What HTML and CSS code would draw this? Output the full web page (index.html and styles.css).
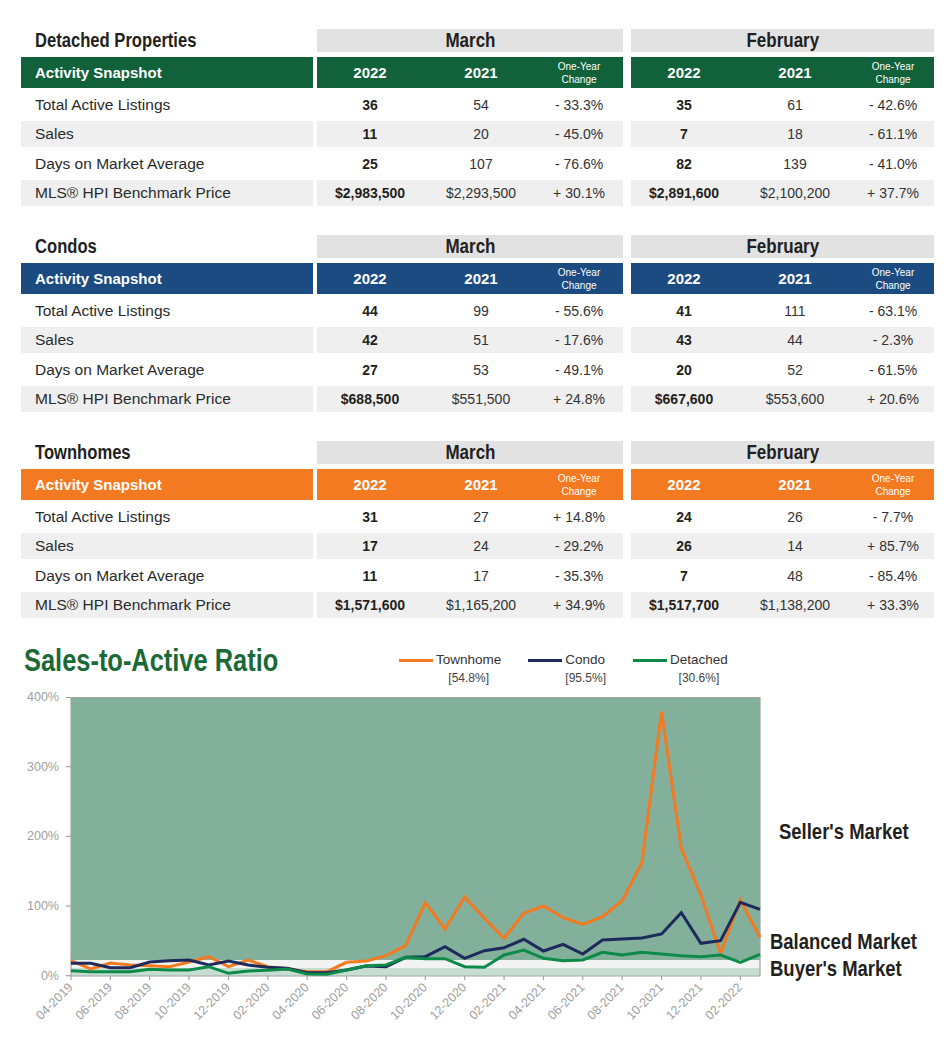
FILE: index.html
```html
<!DOCTYPE html>
<html lang="en">
<head>
<meta charset="utf-8">
<title>Sales-to-Active Ratio</title>
<link rel="stylesheet" href="styles.css">
</head>
<body>
<div class="page">

  <section class="section green">
    <div class="labels">
      <div class="cap"><span class="cnd">Detached Properties</span></div>
      <div class="bar">Activity Snapshot</div>
      <div class="row">Total Active Listings</div>
      <div class="row alt">Sales</div>
      <div class="row">Days on Market Average</div>
      <div class="row alt">MLS® HPI Benchmark Price</div>
    </div>
    <div class="month">
      <div class="cap"><span class="cnd">March</span></div>
      <div class="bar"><span>2022</span><span>2021</span><span class="chg">One-Year<br>Change</span></div>
      <div class="row"><b>36</b><span>54</span><span>- 33.3%</span></div>
      <div class="row alt"><b>11</b><span>20</span><span>- 45.0%</span></div>
      <div class="row"><b>25</b><span>107</span><span>- 76.6%</span></div>
      <div class="row alt"><b>$2,983,500</b><span>$2,293,500</span><span>+ 30.1%</span></div>
    </div>
    <div class="month feb">
      <div class="cap"><span class="cnd">February</span></div>
      <div class="bar"><span>2022</span><span>2021</span><span class="chg">One-Year<br>Change</span></div>
      <div class="row"><b>35</b><span>61</span><span>- 42.6%</span></div>
      <div class="row alt"><b>7</b><span>18</span><span>- 61.1%</span></div>
      <div class="row"><b>82</b><span>139</span><span>- 41.0%</span></div>
      <div class="row alt"><b>$2,891,600</b><span>$2,100,200</span><span>+ 37.7%</span></div>
    </div>
  </section>

  <section class="section blue">
    <div class="labels">
      <div class="cap"><span class="cnd">Condos</span></div>
      <div class="bar">Activity Snapshot</div>
      <div class="row">Total Active Listings</div>
      <div class="row alt">Sales</div>
      <div class="row">Days on Market Average</div>
      <div class="row alt">MLS® HPI Benchmark Price</div>
    </div>
    <div class="month">
      <div class="cap"><span class="cnd">March</span></div>
      <div class="bar"><span>2022</span><span>2021</span><span class="chg">One-Year<br>Change</span></div>
      <div class="row"><b>44</b><span>99</span><span>- 55.6%</span></div>
      <div class="row alt"><b>42</b><span>51</span><span>- 17.6%</span></div>
      <div class="row"><b>27</b><span>53</span><span>- 49.1%</span></div>
      <div class="row alt"><b>$688,500</b><span>$551,500</span><span>+ 24.8%</span></div>
    </div>
    <div class="month feb">
      <div class="cap"><span class="cnd">February</span></div>
      <div class="bar"><span>2022</span><span>2021</span><span class="chg">One-Year<br>Change</span></div>
      <div class="row"><b>41</b><span>111</span><span>- 63.1%</span></div>
      <div class="row alt"><b>43</b><span>44</span><span>- 2.3%</span></div>
      <div class="row"><b>20</b><span>52</span><span>- 61.5%</span></div>
      <div class="row alt"><b>$667,600</b><span>$553,600</span><span>+ 20.6%</span></div>
    </div>
  </section>

  <section class="section orange">
    <div class="labels">
      <div class="cap"><span class="cnd">Townhomes</span></div>
      <div class="bar">Activity Snapshot</div>
      <div class="row">Total Active Listings</div>
      <div class="row alt">Sales</div>
      <div class="row">Days on Market Average</div>
      <div class="row alt">MLS® HPI Benchmark Price</div>
    </div>
    <div class="month">
      <div class="cap"><span class="cnd">March</span></div>
      <div class="bar"><span>2022</span><span>2021</span><span class="chg">One-Year<br>Change</span></div>
      <div class="row"><b>31</b><span>27</span><span>+ 14.8%</span></div>
      <div class="row alt"><b>17</b><span>24</span><span>- 29.2%</span></div>
      <div class="row"><b>11</b><span>17</span><span>- 35.3%</span></div>
      <div class="row alt"><b>$1,571,600</b><span>$1,165,200</span><span>+ 34.9%</span></div>
    </div>
    <div class="month feb">
      <div class="cap"><span class="cnd">February</span></div>
      <div class="bar"><span>2022</span><span>2021</span><span class="chg">One-Year<br>Change</span></div>
      <div class="row"><b>24</b><span>26</span><span>- 7.7%</span></div>
      <div class="row alt"><b>26</b><span>14</span><span>+ 85.7%</span></div>
      <div class="row"><b>7</b><span>48</span><span>- 85.4%</span></div>
      <div class="row alt"><b>$1,517,700</b><span>$1,138,200</span><span>+ 33.3%</span></div>
    </div>
  </section>

  <section class="chart">
    <div class="chart-head">
      <h2 class="chart-title"><span class="cnd">Sales-to-Active Ratio</span></h2>
      <div class="legend">
        <div class="item"><i class="swatch s-town"></i><span class="name">Townhome</span><span class="val">[54.8%]</span></div>
        <div class="item"><i class="swatch s-condo"></i><span class="name">Condo</span><span class="val">[95.5%]</span></div>
        <div class="item"><i class="swatch s-det"></i><span class="name">Detached</span><span class="val">[30.6%]</span></div>
      </div>
    </div>
    <div class="chart-body">
      <svg class="plot" width="770" height="362" viewBox="0 690 770 362" xmlns="http://www.w3.org/2000/svg">
        <rect x="71" y="697" width="689" height="263" fill="#83b09b"/>
        <rect x="71" y="960" width="689" height="8" fill="#f2f3f3"/>
        <rect x="71" y="968" width="689" height="8" fill="#c6ddd1"/>
        <g stroke="#a3a3a3" stroke-width="1.2" fill="none">
          <line x1="66" y1="697.5" x2="760" y2="697.5"/>
          <line x1="760" y1="697" x2="760" y2="976"/>
          <line x1="71" y1="697" x2="71" y2="976"/>
          <line x1="71" y1="976" x2="760" y2="976"/>
          <line x1="66" y1="766.7" x2="71" y2="766.7"/>
          <line x1="66" y1="836.4" x2="71" y2="836.4"/>
          <line x1="66" y1="906" x2="71" y2="906"/>
          <line x1="66" y1="975.7" x2="71" y2="975.7"/>
          <path d="M71 976v4M110.4 976v4M149.7 976v4M189.1 976v4M228.5 976v4M267.9 976v4M307.2 976v4M346.6 976v4M386 976v4M425.3 976v4M464.7 976v4M504.1 976v4M543.5 976v4M582.8 976v4M622.2 976v4M661.6 976v4M700.9 976v4M740.3 976v4"/>
        </g>
        <g class="ylab" text-anchor="end">
          <text x="59" y="701">400%</text>
          <text x="59" y="770.7">300%</text>
          <text x="59" y="840.4">200%</text>
          <text x="59" y="910">100%</text>
          <text x="59" y="979.7">0%</text>
        </g>
        <g class="xlab" text-anchor="end">
          <text x="73.5" y="988" transform="rotate(-45 73.5 988)">04-2019</text>
          <text x="112.9" y="988" transform="rotate(-45 112.9 988)">06-2019</text>
          <text x="152.2" y="988" transform="rotate(-45 152.2 988)">08-2019</text>
          <text x="191.6" y="988" transform="rotate(-45 191.6 988)">10-2019</text>
          <text x="231" y="988" transform="rotate(-45 231 988)">12-2019</text>
          <text x="270.4" y="988" transform="rotate(-45 270.4 988)">02-2020</text>
          <text x="309.7" y="988" transform="rotate(-45 309.7 988)">04-2020</text>
          <text x="349.1" y="988" transform="rotate(-45 349.1 988)">06-2020</text>
          <text x="388.5" y="988" transform="rotate(-45 388.5 988)">08-2020</text>
          <text x="427.8" y="988" transform="rotate(-45 427.8 988)">10-2020</text>
          <text x="467.2" y="988" transform="rotate(-45 467.2 988)">12-2020</text>
          <text x="506.6" y="988" transform="rotate(-45 506.6 988)">02-2021</text>
          <text x="546" y="988" transform="rotate(-45 546 988)">04-2021</text>
          <text x="585.3" y="988" transform="rotate(-45 585.3 988)">06-2021</text>
          <text x="624.7" y="988" transform="rotate(-45 624.7 988)">08-2021</text>
          <text x="664.1" y="988" transform="rotate(-45 664.1 988)">10-2021</text>
          <text x="703.4" y="988" transform="rotate(-45 703.4 988)">12-2021</text>
          <text x="742.8" y="988" transform="rotate(-45 742.8 988)">02-2022</text>
        </g>
        <g fill="none" stroke-width="3" stroke-linejoin="miter">
          <polyline stroke="#f37a21" points="71,960.7 90.7,969 110.4,963 130.1,965 149.7,965.7 169.4,966.7 189.1,962 208.8,956.7 228.5,966.7 248.2,960 267.9,966.7 287.5,969 307.2,971.7 326.9,971.7 346.6,962.3 366.3,961 386,955.7 405.7,945.7 425.3,902.7 445,929 464.7,897 484.4,918.3 504.1,938.3 523.8,913.3 543.5,906 563.1,917.7 582.8,924.3 602.5,916.7 622.2,900.7 641.9,862.7 661.6,711.7 681.3,848.3 700.9,895 720.6,953.3 740.3,900 760,937.3"/>
          <polyline stroke="#1d2a5c" points="71,963.3 90.7,963.3 110.4,967.7 130.1,967.7 149.7,962 169.4,960.7 189.1,960 208.8,965 228.5,961 248.2,965 267.9,967.3 287.5,968.3 307.2,972.7 326.9,972.7 346.6,970 366.3,966 386,966.7 405.7,957.3 425.3,956.7 445,946.7 464.7,958.3 484.4,950.7 504.1,947.7 523.8,939.3 543.5,951 563.1,944.3 582.8,954 602.5,940 622.2,939 641.9,938 661.6,934 681.3,912.7 700.9,943.3 720.6,940.7 740.3,902.3 760,909.3"/>
          <polyline stroke="#0d8a47" points="71,970.7 90.7,971.7 110.4,971.7 130.1,971.7 149.7,969.3 169.4,970 189.1,970 208.8,966.7 228.5,973.3 248.2,971 267.9,970.3 287.5,969 307.2,974 326.9,974.3 346.6,970 366.3,965.7 386,965 405.7,957.3 425.3,958.7 445,958.7 464.7,966.7 484.4,967.3 504.1,955 523.8,950 543.5,958.3 563.1,960.7 582.8,960 602.5,952.3 622.2,955 641.9,952.3 661.6,954 681.3,955.7 700.9,956.7 720.6,955 740.3,962.3 760,954.3"/>
        </g>
      </svg>
      <div class="side">
        <div class="seller"><span class="cnd">Seller's Market</span></div>
        <div class="balanced"><span class="cnd">Balanced Market</span></div>
        <div class="buyer"><span class="cnd">Buyer's Market</span></div>
      </div>
    </div>
  </section>

</div>
</body>
</html>
```

FILE: styles.css
```css
* { box-sizing: border-box; }

body {
  margin: 0;
  width: 950px;
  background: #ffffff;
  color: #231f20;
  font-family: "Liberation Sans", Arial, sans-serif;
}

.page {
  padding: 29px 0 0 21px;
}

/* condensed look for the headline face */
.cnd {
  display: inline-block;
  white-space: nowrap;
  transform: scaleX(0.83);
  transform-origin: left center;
}

.section {
  display: flex;
  margin-bottom: 29px;
}

.section.orange {
  margin-bottom: 0;
}

.labels { width: 292px; }

.month {
  width: 306px;
  margin-left: 4px;
}

.month.feb {
  width: 303px;
  margin-left: 8px;
}

.cap {
  height: 23px;
  display: flex;
  align-items: center;
  font-weight: bold;
  font-size: 20px;
  color: #231f20;
}

.labels .cap { padding-left: 14px; }

.month .cap {
  justify-content: center;
  background: #e2e2e3;
}

.month .cap .cnd {
  transform: scaleX(0.85);
  transform-origin: center center;
}

.bar {
  height: 31px;
  margin-top: 5px;
  color: #ffffff;
}

.green .bar { background: #11613a; }
.blue .bar { background: #1b4b80; }
.orange .bar { background: #f37a21; }

.labels .bar {
  display: flex;
  align-items: center;
  padding-left: 14px;
  font-weight: bold;
  font-size: 15px;
}

.month .bar,
.month .row {
  display: grid;
  grid-template-columns: 106px 116px 80px;
  align-items: center;
  text-align: center;
}

.month .bar {
  font-weight: bold;
  font-size: 15px;
}

.month .bar .chg {
  font-weight: normal;
  font-size: 10px;
  line-height: 13px;
}

.row {
  height: 26px;
  margin-top: 3.5px;
}

.row.alt { background: #efeff0; }

.labels .row {
  display: flex;
  align-items: center;
  padding-left: 14px;
  font-size: 15.5px;
  color: #2a2a2a;
}

.month .row {
  font-size: 14px;
  color: #333333;
}

.month .row b {
  color: #231f20;
}

/* chart */

.chart-head {
  display: grid;
  grid-template-columns: 375px auto;
  height: 72px;
  margin-left: -21px;
  padding-left: 24px;
}

.chart-title {
  margin: 25px 0 0 0;
  font-weight: bold;
  font-size: 31px;
  line-height: 36px;
  color: #1a6a37;
  white-space: nowrap;
}

.chart-title .cnd {
  transform: scaleX(0.82);
}

.legend {
  display: flex;
  align-items: flex-start;
  gap: 27px;
  margin-top: 34px;
}

.item {
  display: grid;
  grid-template-columns: 34px auto;
  column-gap: 3px;
  row-gap: 2px;
}

.swatch {
  display: block;
  height: 3px;
  align-self: center;
}

.s-town { background: #f37a21; }
.s-condo { background: #1d2a5c; }
.s-det { background: #0d8a47; }

.name {
  font-size: 13.5px;
  line-height: 16px;
  color: #333333;
}

.val {
  grid-column: 2;
  text-align: center;
  font-size: 12px;
  line-height: 16px;
  color: #444444;
}

.chart-body {
  display: flex;
  margin-left: -21px;
}

.plot {
  display: block;
  flex: none;
}

.ylab text,
.xlab text {
  font-family: "Liberation Sans", Arial, sans-serif;
  font-size: 12.5px;
  fill: #a0a0a0;
}

.side {
  padding-top: 129px;
  font-weight: bold;
  font-size: 22px;
  color: #231f20;
  white-space: nowrap;
}

.side .cnd {
  transform: scaleX(0.84);
}

.seller {
  line-height: 26px;
  margin-left: 9px;
}

.balanced {
  margin-top: 85px;
  line-height: 24px;
}

.buyer {
  margin-top: 3px;
  line-height: 24px;
}
```
